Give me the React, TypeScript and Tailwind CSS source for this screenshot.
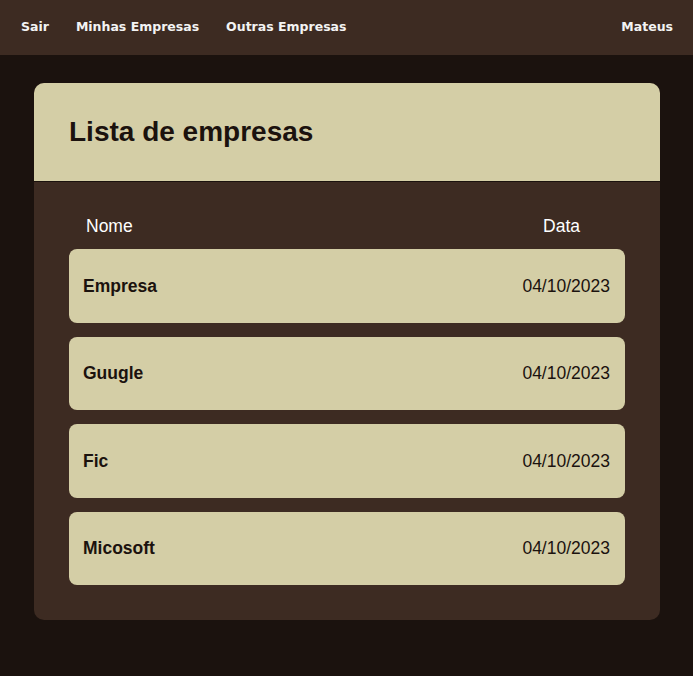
type Empresa = {
  nome: string;
  data: string;
};

const empresas: Empresa[] = [
  { nome: "Empresa", data: "04/10/2023" },
  { nome: "Guugle", data: "04/10/2023" },
  { nome: "Fic", data: "04/10/2023" },
  { nome: "Micosoft", data: "04/10/2023" },
];

function Navbar() {
  return (
    <nav className="h-[55px] bg-[#3d2b22] flex items-center justify-between pl-[21px] pr-[20px] font-['DejaVu_Sans',sans-serif] text-[12.5px] font-bold text-[#f3f3f3]">
      <div className="flex items-center gap-[27px]">
        <a href="#">Sair</a>
        <a href="#">Minhas Empresas</a>
        <a href="#">Outras Empresas</a>
      </div>
      <a href="#">Mateus</a>
    </nav>
  );
}

function App() {
  return (
    <div className="min-h-[676px] bg-[#1b120e] font-['Liberation_Sans',Arial,sans-serif]">
      <Navbar />
      <main className="pl-[34px] pr-[33px] pt-[28px]">
        <div className="rounded-[10px] overflow-hidden bg-[#3d2b22]">
          <div className="h-[99px] bg-[#d4cea6] border-b border-[#1b120e] flex items-center px-[35px]">
            <h1 className="text-[28px] font-bold text-[#1b120e]">Lista de empresas</h1>
          </div>
          <div className="px-[35px] pt-[34px] pb-[35px]">
            <div className="flex justify-between pl-[17px] pr-[45px] text-[17.5px] leading-[20px] text-white">
              <span>Nome</span>
              <span>Data</span>
            </div>
            <div className="mt-[13px] flex flex-col gap-[14px]">
              {empresas.map((e, index) => (
                <div
                  key={index}
                  className="h-[73.5px] rounded-[8px] bg-[#d4cea6] flex items-center justify-between pl-[14px] pr-[15px] text-[17.5px] text-[#1b120e]"
                >
                  <span className="font-bold">{e.nome}</span>
                  <span>{e.data}</span>
                </div>
              ))}
            </div>
          </div>
        </div>
      </main>
    </div>
  );
}

export default App;
